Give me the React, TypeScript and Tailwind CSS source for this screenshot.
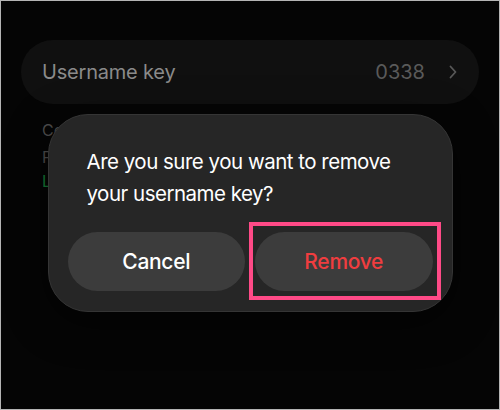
import React from 'react';

const font = { fontFamily: 'Inter, "Noto Sans", sans-serif' };

const Chevron = () => (
  <svg width="10" height="14" viewBox="0 0 10 14" fill="none">
    <path d="M2.5 1.5 L7.5 7 L2.5 12.5" stroke="#585858" strokeWidth="1.8" strokeLinecap="round" strokeLinejoin="round" />
  </svg>
);

export default function App() {
  return (
    <div
      className="relative w-[500px] h-[410px] overflow-hidden border border-[#b5b5b5] bg-[#050505]"
      style={font}
    >
      {/* settings page under the dimmed dialog */}
      <div className="px-[20px] pt-[39px]">
        <div className="flex h-[64px] items-center rounded-full bg-[#101010] pl-[21px] pr-[21px]">
          <span className="flex-1 text-[20px] tracking-[-0.2px] text-[#8a8a8a]">Username key</span>
          <span className="mr-[23px] text-[20px] text-[#5a5a5a]">0338</span>
          <Chevron />
        </div>
        <div className="mt-[12px] pl-[21px] text-[16px] text-[#4f4f4f]">
          <div className="whitespace-nowrap leading-[28px]">Contacts can message you with this username and</div>
          <div className="whitespace-nowrap leading-[26px]">Profile details stay private to you.</div>
          <div className="whitespace-nowrap leading-[22px] text-[#16823a]">Learn more</div>
        </div>
      </div>

      {/* confirm dialog */}
      <div className="absolute inset-0 flex justify-center pt-[113px]">
        <div className="relative h-[198px] w-[405px] rounded-[40px] border border-[#353535] bg-[#262626] shadow-[0_10px_40px_rgba(0,0,0,0.6)]">
          <p className="px-[38px] pt-[31px] text-[20.5px] leading-[32px] tracking-[-0.5px] text-white">
            Are you sure you want to remove
            <br />
            your username key?
          </p>
          <div className="mt-[22px] flex gap-[10px] px-[19px]">
            <button className="h-[59px] flex-1 rounded-full bg-[#3c3c3c] text-[21px] font-medium tracking-[-0.3px] text-white">
              Cancel
            </button>
            <button className="h-[59px] flex-1 rounded-full bg-[#3c3c3c] text-[21px] font-medium tracking-[-0.3px] text-[#f03d3f]">
              Remove
            </button>
          </div>
        </div>
      </div>

      {/* highlight around the remove button */}
      <div className="absolute left-[248px] top-[221px] h-[78px] w-[192px] border-[4px] border-[#ff4a87]" />
    </div>
  );
}
